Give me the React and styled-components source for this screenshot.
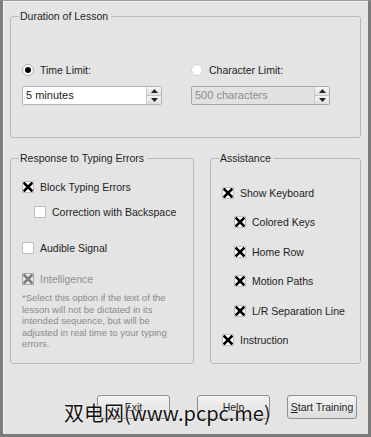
import React, { useState } from 'react';
import styled, { createGlobalStyle } from 'styled-components';

const GlobalStyle = createGlobalStyle`
  html, body {
    margin: 0;
    padding: 0;
    background: #e4e4e4;
  }
  body {
    font-family: "Liberation Sans", Arial, sans-serif;
    font-size: 10.5px;
    color: #1e1e1e;
  }
`;

const Window = styled.div`
  position: relative;
  box-sizing: border-box;
  width: 371px;
  height: 437px;
  background: #e4e4e4;
  border-left: 3px solid #7c7c7c;
  border-right: 3px solid #7c7c7c;
  border-bottom: 3px solid #7c7c7c;
  border-top: 1px solid #9a9a9a;
  box-shadow: inset 1px 1px 0 #f4f4f4;
  padding: 9px 7px 0 7px;
  display: flex;
  flex-direction: column;
`;

const Group = styled.fieldset`
  margin: 0;
  min-width: 0;
  flex-shrink: 0;
  box-sizing: border-box;
  border: 1px solid #b8b8b8;
  border-radius: 3px;
  padding: 0 0 0 11px;
  height: ${p => p.h}px;
  width: ${p => (p.w ? p.w + 'px' : 'auto')};
  display: flex;
  flex-direction: column;
`;

const Legend = styled.legend`
  padding: 0 3px 0 1px;
  margin-left: -3px;
  font-size: 10.5px;
  line-height: 13px;
`;

const Columns = styled.div`
  display: flex;
  gap: 16px;
  margin-top: 14px;
`;

const DurationRow = styled.div`
  display: flex;
  margin-top: 40px;
`;

const LimitCol = styled.div`
  display: flex;
  flex-direction: column;
  width: ${p => p.w}px;
`;

const OptionLine = styled.label`
  display: flex;
  align-items: center;
  gap: 6px;
  height: 14px;
  margin-left: ${p => p.indent || 0}px;
  margin-top: ${p => p.top || 0}px;
  color: ${p => (p.disabled ? '#8e8e8e' : '#1e1e1e')};
  white-space: nowrap;
`;

const Radio = styled.span`
  box-sizing: border-box;
  width: 12px;
  height: 12px;
  border-radius: 50%;
  background: #fff;
  border: 1px solid ${p => (p.on ? '#b0b0b0' : '#d4d4d4')};
  display: flex;
  align-items: center;
  justify-content: center;
  &::after {
    content: '';
    width: 6px;
    height: 6px;
    border-radius: 50%;
    background: ${p => (p.on ? '#000' : 'transparent')};
  }
`;

const Box = styled.span`
  box-sizing: border-box;
  width: 12px;
  height: 12px;
  background: ${p => (p.disabled ? '#e8e8e8' : '#fff')};
  border: 1px solid ${p => (p.disabled ? '#a8a8a8' : '#bdbdbd')};
  display: flex;
  align-items: center;
  justify-content: center;
  flex-shrink: 0;
`;

const Spin = styled.div`
  box-sizing: border-box;
  display: flex;
  width: ${p => p.w}px;
  height: 19px;
  margin-top: 9px;
  border: 1px solid ${p => (p.disabled ? '#a8a8a8' : '#b4b4b4')};
  border-radius: 2px;
  background: ${p => (p.disabled ? '#e2e2e2' : '#fff')};
`;

const SpinText = styled.div`
  flex: 1;
  padding-left: 3px;
  line-height: 17px;
  font-size: 11px;
  color: ${p => (p.disabled ? '#8c8c8c' : '#1e1e1e')};
`;

const SpinButtons = styled.div`
  width: 14px;
  display: flex;
  flex-direction: column;
  border-left: 1px solid #c8c8c8;
`;

const SpinBtn = styled.div`
  flex: 1;
  display: flex;
  align-items: center;
  justify-content: center;
  background: linear-gradient(#f6f6f6, #dedede);
  & + & {
    border-top: 1px solid #c4c4c4;
  }
`;

const Note = styled.p`
  margin: 6px 0 0 0;
  font-size: 9.5px;
  line-height: 11.6px;
  color: #8a8a8a;
  white-space: nowrap;
`;

const ButtonRow = styled.div`
  display: flex;
  justify-content: flex-end;
  margin-top: 31px;
  padding-right: 4px;
`;

const Button = styled.button`
  box-sizing: border-box;
  width: ${p => p.w}px;
  height: 24px;
  font-family: inherit;
  font-size: 10.5px;
  white-space: nowrap;
  color: #1e1e1e;
  border: 1px solid #8f8f8f;
  border-radius: 3px;
  background: linear-gradient(#f4f4f4, #dcdcdc);
  margin-left: ${p => p.gap || 0}px;
  padding: 0;
`;

const Watermark = styled.div`
  position: absolute;
  left: 61px;
  top: 397px;
  font-family: "Noto Sans CJK SC", "DejaVu Sans", sans-serif;
  font-size: 20px;
  color: #111;
  text-shadow: 0 0 2px #fff, 0 0 1px #fff;
  pointer-events: none;
  white-space: nowrap;
`;

const Cross = ({ color = '#000' }) => (
  <svg width="10" height="10" viewBox="0 0 10 10">
    <path d="M1.5 1.5 L8.5 8.5 M8.5 1.5 L1.5 8.5" stroke={color} strokeWidth="2.6" strokeLinecap="square" />
  </svg>
);

const Arrow = ({ up }) => (
  <svg width="7" height="4" viewBox="0 0 7 4">
    <path d={up ? 'M0 4 L3.5 0 L7 4 Z' : 'M0 0 L3.5 4 L7 0 Z'} fill="#222" />
  </svg>
);

function Check({ label, on, disabled, indent, top }) {
  return (
    <OptionLine indent={indent} top={top} disabled={disabled}>
      <Box disabled={disabled}>{on && <Cross color={disabled ? '#7c7c7c' : '#000'} />}</Box>
      {label}
    </OptionLine>
  );
}

function SpinBox({ value, w, disabled }) {
  return (
    <Spin w={w} disabled={disabled}>
      <SpinText disabled={disabled}>{value}</SpinText>
      <SpinButtons>
        <SpinBtn><Arrow up /></SpinBtn>
        <SpinBtn><Arrow /></SpinBtn>
      </SpinButtons>
    </Spin>
  );
}

export default function App() {
  const [mode, setMode] = useState('time');

  return (
    <>
      <GlobalStyle />
      <Window>
        <Group h={128}>
          <Legend>Duration of Lesson</Legend>
          <DurationRow>
            <LimitCol w={169}>
              <OptionLine onClick={() => setMode('time')}>
                <Radio on={mode === 'time'} />
                Time Limit:
              </OptionLine>
              <SpinBox value="5 minutes" w={140} />
            </LimitCol>
            <LimitCol w={160}>
              <OptionLine onClick={() => setMode('char')}>
                <Radio on={mode === 'char'} />
                Character Limit:
              </OptionLine>
              <SpinBox value="500 characters" w={139} disabled />
            </LimitCol>
          </DurationRow>
        </Group>

        <Columns>
          <Group h={212} w={184}>
            <Legend>Response to Typing Errors</Legend>
            <Check label="Block Typing Errors" on top={15} />
            <Check label="Correction with Backspace" indent={12} top={11} />
            <Check label="Audible Signal" top={22} />
            <Check label="Intelligence" on disabled top={17} />
            <Note>
              *Select this option if the text of the<br />
              lesson will not be dictated in its<br />
              intended sequence, but will be<br />
              adjusted in real time to your typing<br />
              errors.
            </Note>
          </Group>
          <Group h={212} w={151}>
            <Legend>Assistance</Legend>
            <Check label="Show Keyboard" on top={21} />
            <Check label="Colored Keys" on indent={12} top={15} />
            <Check label="Home Row" on indent={12} top={16} />
            <Check label="Motion Paths" on indent={12} top={15} />
            <Check label="L/R Separation Line" on indent={12} top={16} />
            <Check label="Instruction" on top={15} />
          </Group>
        </Columns>

        <ButtonRow>
          <Button w={73}>Exit</Button>
          <Button w={73} gap={27}>Help</Button>
          <Button w={70} gap={17}><u>S</u>tart Training</Button>
        </ButtonRow>

        <Watermark>双电网(www.pcpc.me)</Watermark>
      </Window>
    </>
  );
}
